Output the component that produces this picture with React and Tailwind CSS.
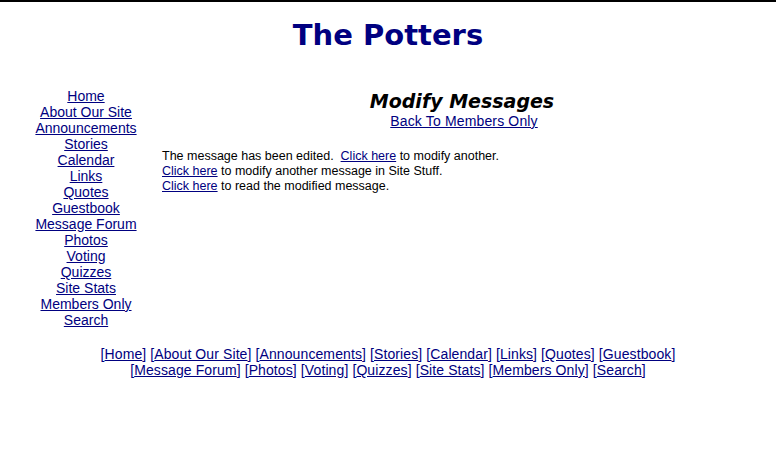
import React from 'react';

const links = [
  'Home',
  'About Our Site',
  'Announcements',
  'Stories',
  'Calendar',
  'Links',
  'Quotes',
  'Guestbook',
  'Message Forum',
  'Photos',
  'Voting',
  'Quizzes',
  'Site Stats',
  'Members Only',
  'Search',
];

const arial = { fontFamily: '"Liberation Sans", Arial, sans-serif' };
const verdana = { fontFamily: '"DejaVu Sans", Verdana, sans-serif' };

const FooterLinks = ({ items }) => (
  <>
    {items.map((item, idx) => (
      <React.Fragment key={item}>
        [<a href="#" className="underline">{item}</a>]{idx < items.length - 1 ? ' ' : ''}
      </React.Fragment>
    ))}
  </>
);

const App = () => {
  return (
    <div className="min-h-[457px] bg-white border-t-2 border-black px-[10px] text-black" style={arial}>
      {/* Header */}
      <h1 className="pt-[16px] text-center text-[29px] leading-[34px] font-bold text-[#000080]" style={verdana}>
        The Potters
      </h1>

      <div className="flex mt-[36px]">
        {/* Side nav */}
        <nav className="w-[152px] flex flex-col items-center text-[14px] leading-[16px]">
          {links.map(link => (
            <a key={link} href="#" className="underline text-[#000080]">{link}</a>
          ))}
        </nav>

        {/* Main */}
        <div className="flex-1 pt-[2px]">
          <h2 className="text-center text-[19px] leading-[23px] font-bold italic pr-[4px]" style={verdana}>
            Modify Messages
          </h2>
          <div className="text-center text-[14px] leading-[16px] tracking-[0.15px]">
            <a href="#" className="underline text-[#000080]">Back To Members Only</a>
          </div>
          <div className="mt-[20px] text-[12.5px] leading-[15px]">
            <p>
              The message has been edited.&nbsp; <a href="#" className="underline text-[#000080]">Click here</a> to modify another.
            </p>
            <p>
              <a href="#" className="underline text-[#000080]">Click here</a> to modify another message in Site Stuff.
            </p>
            <p>
              <a href="#" className="underline text-[#000080]">Click here</a> to read the modified message.
            </p>
          </div>
        </div>
      </div>

      {/* Footer nav */}
      <div className="mt-[18px] text-center text-[14px] leading-[16px] tracking-[0.1px] text-[#000080]">
        <FooterLinks items={links.slice(0, 8)} />
        <br />
        <FooterLinks items={links.slice(8)} />
      </div>
    </div>
  );
};

export default App;
